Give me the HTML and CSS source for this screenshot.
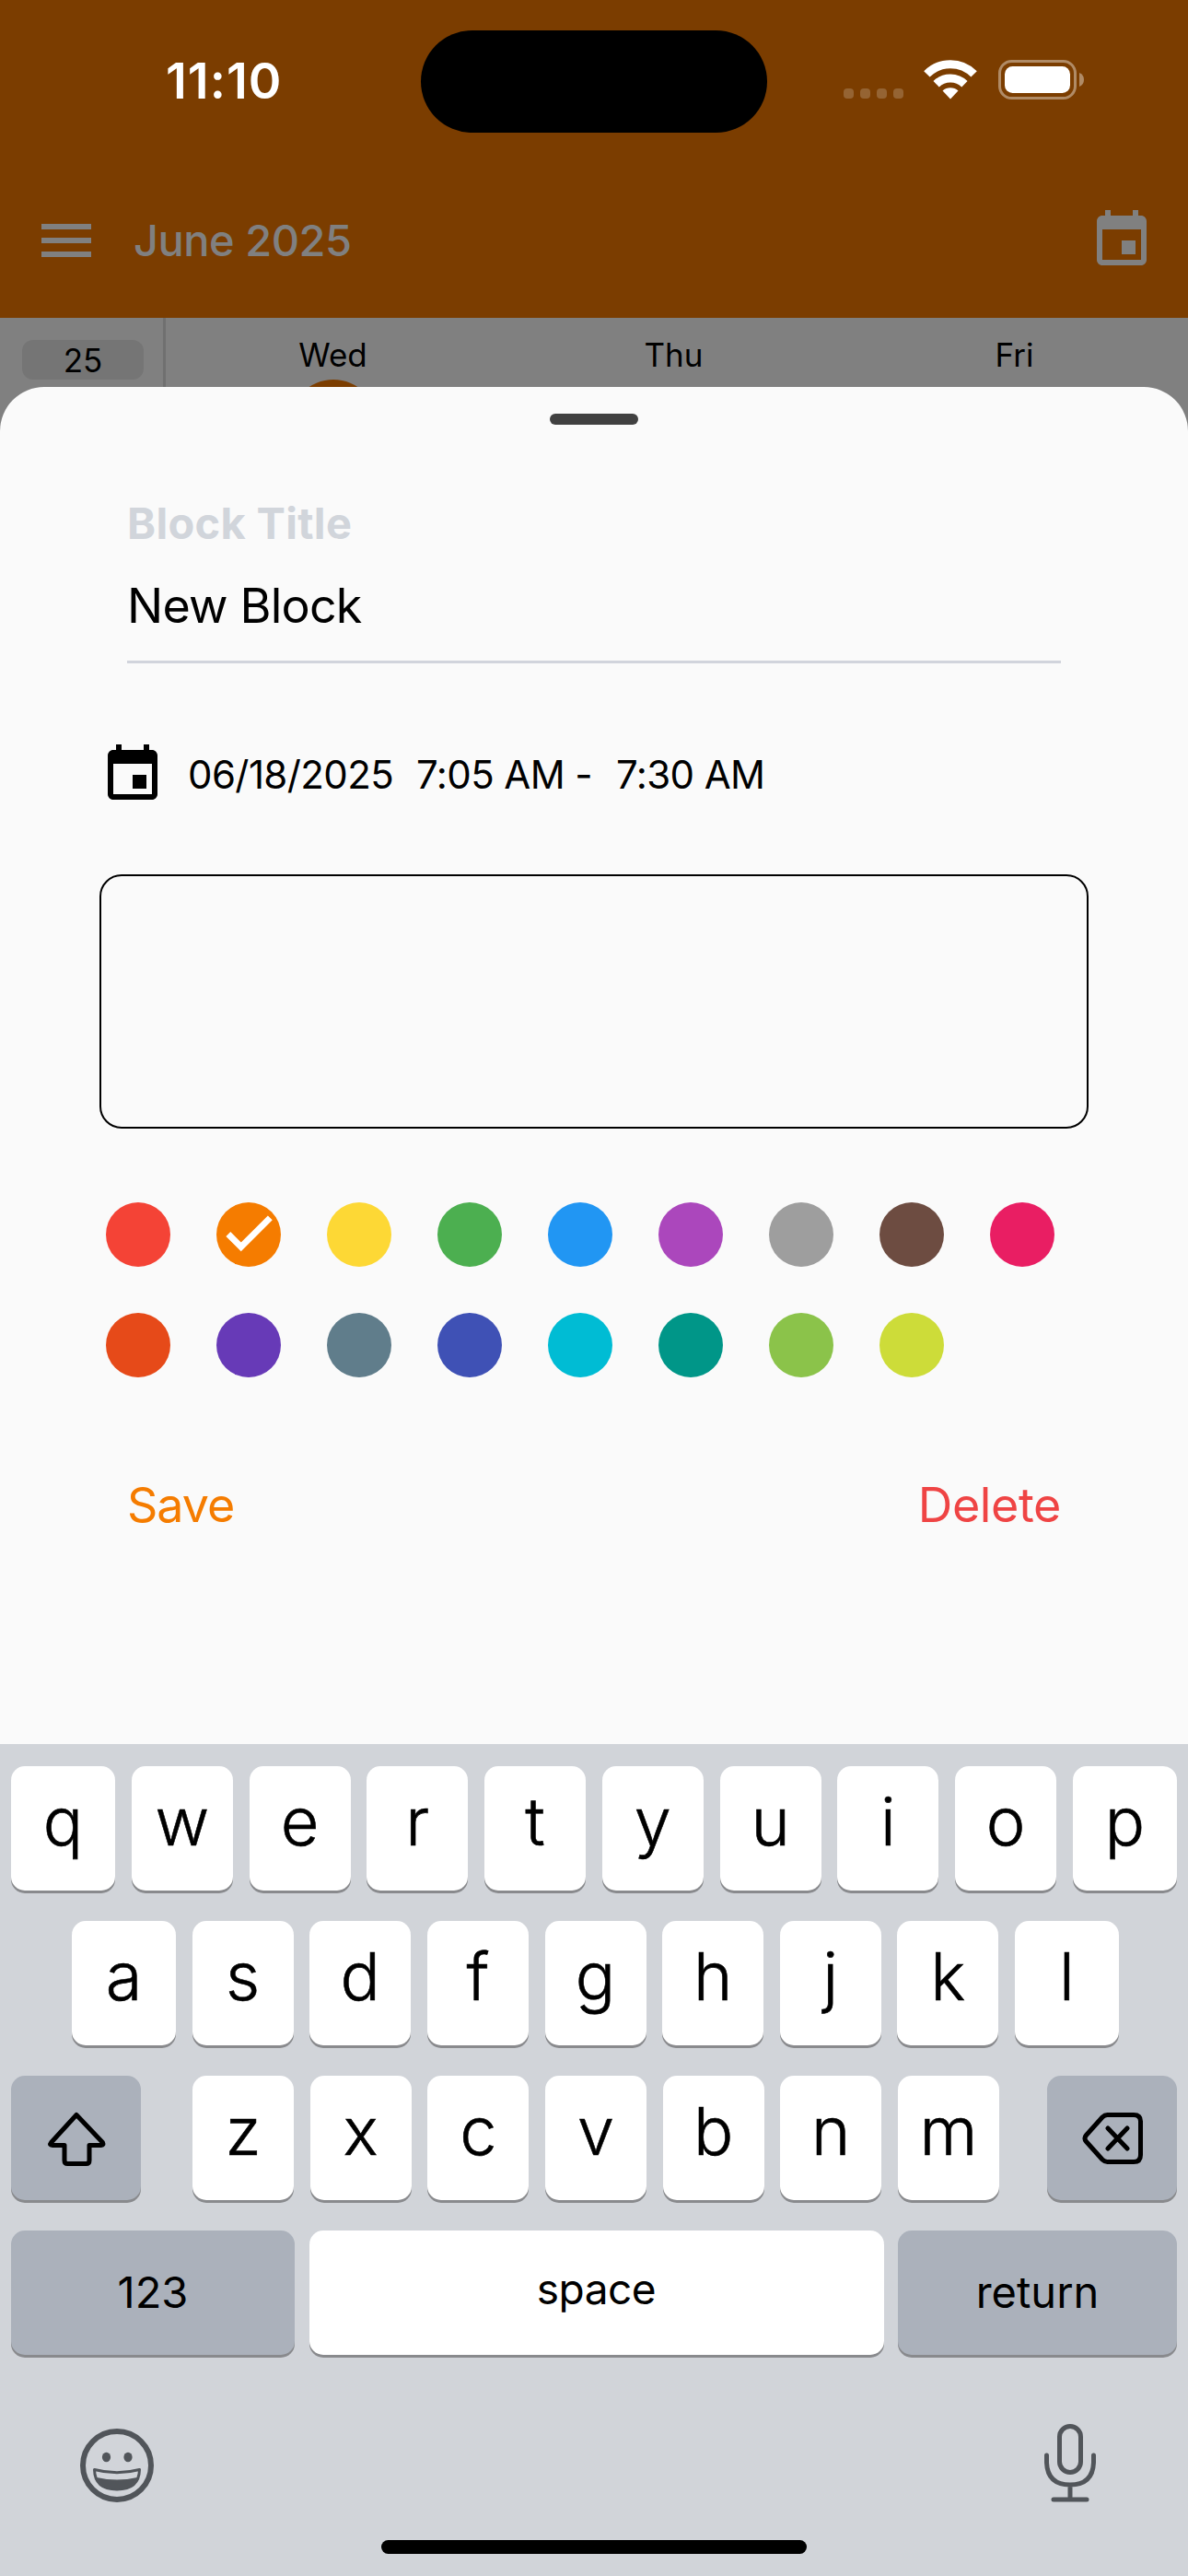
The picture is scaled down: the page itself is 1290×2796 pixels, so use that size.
FILE: index.html
```html
<!DOCTYPE html>
<html lang="en">
<head>
<meta charset="utf-8">
<title>New Block</title>
<link rel="stylesheet" href="styles.css">
</head>
<body>
<div class="phone">
  <header class="top">
    <div class="status">
      <span class="time">11:10</span>
      <span class="island"></span>
      <span class="indicators">
        <span class="cell"><i></i><i></i><i></i><i></i></span>
        <svg class="wifi" width="58" height="43" viewBox="0 0 58 43">
          <g fill="none" stroke="#fff" stroke-width="9">
            <path d="M3.400 15.400A36 36 0 0 1 54.600 15.400"/>
            <path d="M13.600 26.200A22 22 0 0 1 44.400 26.200"/>
          </g>
          <path d="M29 42.500L20.500 33.500A13 13 0 0 1 37.500 33.500Z" fill="#fff"/>
        </svg>
        <svg class="battery" width="94" height="43" viewBox="0 0 94 43">
          <rect x="1.500" y="1.500" width="82" height="40" rx="13" fill="none" stroke="#b08b66" stroke-width="3"/>
          <rect x="7" y="7" width="71" height="29" rx="8.500" fill="#fff"/>
          <path d="M88 14Q93 16 93 21.500Q93 27 88 29Z" fill="#b08b66"/>
        </svg>
      </span>
    </div>
    <div class="appbar">
      <span class="menu"><i></i><i></i><i></i></span>
      <span class="month">June 2025</span>
      <svg class="event" width="72" height="72" viewBox="0 0 24 24"><path fill="#808080" d="M17 12h-5v5h5v-5zM16 1v2H8V1H6v2H5c-1.110 0-1.990.9-1.990 2L3 19c0 1.100.89 2 2 2h14c1.100 0 2-.9 2-2V5c0-1.100-.9-2-2-2h-1V1h-2zm3 18H5V8h14v11z"/></svg>
    </div>
  </header>
  <div class="calendar">
    <div class="week"><span class="badge">25</span></div>
    <div class="day"><span>Wed</span><i class="today"></i></div>
    <div class="day"><span>Thu</span></div>
    <div class="day"><span>Fri</span></div>
  </div>
  <main class="sheet">
    <span class="handle"></span>
    <div class="field">
      <label class="label">Block Title</label>
      <div class="value">New Block</div>
    </div>
    <div class="when">
      <svg width="72" height="72" viewBox="0 0 24 24"><path d="M17 12h-5v5h5v-5zM16 1v2H8V1H6v2H5c-1.110 0-1.990.9-1.990 2L3 19c0 1.100.89 2 2 2h14c1.100 0 2-.9 2-2V5c0-1.100-.9-2-2-2h-1V1h-2zm3 18H5V8h14v11z"/></svg>
      <span class="date">06/18/2025</span><span class="from">7:05 AM -</span><span class="to">7:30 AM</span>
    </div>
    <div class="notes"></div>
    <div class="swatches">
      <i class="red"></i>
      <i class="orange"><svg width="66" height="66" viewBox="0 0 24 24"><path fill="#fff" stroke="#fff" stroke-width=".5" d="M9 16.170 4.830 12l-1.420 1.410L9 19 21 7l-1.410-1.410z"/></svg></i>
      <i class="yellow"></i><i class="green"></i><i class="blue"></i><i class="purple"></i><i class="grey"></i><i class="brown"></i><i class="pink"></i>
      <i class="deep-orange"></i><i class="deep-purple"></i><i class="blue-grey"></i><i class="indigo"></i><i class="cyan"></i><i class="teal"></i><i class="light-green"></i><i class="lime"></i>
    </div>
    <div class="actions"><span class="save">Save</span><span class="delete">Delete</span></div>
  </main>
  <section class="keyboard">
    <div class="row first">
      <span class="key edge">q</span><span class="key">w</span><span class="key">e</span><span class="key">r</span><span class="key">t</span><span class="key">y</span><span class="key">u</span><span class="key">i</span><span class="key">o</span><span class="key edge">p</span>
    </div>
    <div class="row second">
      <span class="key edge">a</span><span class="key">s</span><span class="key">d</span><span class="key">f</span><span class="key">g</span><span class="key">h</span><span class="key">j</span><span class="key">k</span><span class="key edge">l</span>
    </div>
    <div class="row third">
      <span class="key dark mod"><svg width="68" height="60" viewBox="0 0 68 60"><path d="M34 4.500L62.500 34.500Q64 37.500 61 37.500H48V54Q48 57.500 44.500 57.500H24.500Q21 57.500 21 54V37.500H8Q4 37.500 6.500 34.500Z" fill="none" stroke="#000" stroke-width="5" stroke-linejoin="round"/></svg></span>
      <span class="letters"><span class="key">z</span><span class="key">x</span><span class="key">c</span><span class="key">v</span><span class="key">b</span><span class="key">n</span><span class="key">m</span></span>
      <span class="key dark mod"><svg width="68" height="56" viewBox="0 0 68 56"><path d="M28.500 2.500H57Q64.500 2.500 64.500 9.500V46Q64.500 53.500 57 53.500H28.500Q25.500 53.500 23 51L5.500 31.500Q2.500 28 5.500 24.500L23 5Q25.500 2.500 28.500 2.500ZM29 17L50 39M50 17L29 39" fill="none" stroke="#000" stroke-width="5" stroke-linecap="round" stroke-linejoin="round"/></svg></span>
    </div>
    <div class="row fourth">
      <span class="key dark wide">123</span>
      <span class="key wide space">space</span>
      <span class="key dark wide">return</span>
    </div>
    <div class="tools">
      <svg width="80" height="80" viewBox="0 0 80 80">
        <circle cx="40" cy="40" r="37" fill="none" stroke="#51555a" stroke-width="6"/>
        <ellipse cx="28.500" cy="31" rx="4.600" ry="5.200" fill="#51555a"/>
        <ellipse cx="52" cy="31" rx="4.600" ry="5.200" fill="#51555a"/>
        <path d="M15.500 44.500Q40 51 64.500 44.500Q64 66 40 66Q16 66 15.500 44.500Z" fill="none" stroke="#51555a" stroke-width="3" stroke-linejoin="round"/>
        <path d="M18 53Q40 58 62 53Q57 66 40 66Q23 66 18 53Z" fill="#51555a"/>
      </svg>
      <svg width="56" height="85" viewBox="0 0 56 85">
        <g fill="none" stroke="#51555a" stroke-width="5" stroke-linecap="round">
          <rect x="16.500" y="2.500" width="23" height="50" rx="11.500"/>
          <path d="M2.500 34V42Q3.500 66 28 66Q52.500 66 53.500 42V34M28 66V81M10 82H46"/>
        </g>
      </svg>
    </div>
    <span class="home"></span>
  </section>
</div>
</body>
</html>
```
FILE: styles.css
```css
* { box-sizing: border-box; }
body { margin: 0; font-family: Inter, "Liberation Sans", sans-serif; color: #000; }
i { display: block; }
svg { display: block; flex: none; }
.phone { width: 1290px; height: 2796px; overflow: hidden; display: flex; flex-direction: column; background: #808080; }

.top { height: 345px; background: #7b3d00; display: flex; flex-direction: column; flex: none; }
.status { height: 177px; padding-top: 33px; display: grid; grid-template-columns: 457px 376px 457px; }
.time { color: #fff; font-size: 54px; font-weight: 600; line-height: 110px; padding-left: 180px; letter-spacing: 1px; }
.island { height: 111px; border-radius: 56px; background: #000; }
.indicators { display: flex; align-items: flex-start; padding: 32px 0 0 83px; }
.cell { display: flex; gap: 7px; padding-top: 31px; margin-right: 22px; }
.cell i { width: 11px; height: 11px; border-radius: 4px; background: #956433; }
.wifi { margin-right: 23px; }
.appbar { height: 168px; display: flex; align-items: flex-start; padding: 48px 36px 0 45px; }
.menu { width: 54px; display: flex; flex-direction: column; gap: 9px; padding-top: 18px; }
.menu i { height: 6px; background: #808080; }
.month { flex: 1; color: #808080; font-size: 47px; font-weight: 500; line-height: 72px; padding-left: 46px; letter-spacing: -0.5px; }

.calendar { height: 75px; flex: none; display: grid; grid-template-columns: 180px 370px 370px 370px; }
.week { border-right: 3px solid #707070; padding: 24px 21px 0 24px; }
.badge { display: block; height: 43px; border-radius: 12px; background: #757575; text-align: center; font-size: 35px; line-height: 45px; }
.day { font-size: 35px; text-align: center; line-height: 42px; padding: 19px 7px 0 0; }
.day span { display: block; }
.today { width: 96px; height: 96px; border-radius: 50%; background: #7b3d00; margin: 6px auto 0; }

.sheet { position: relative; height: 1473px; flex: none; background: #fafafa; border-radius: 48px 48px 0 0; display: flex; flex-direction: column; padding: 29px 108px 0; }
.handle { width: 96px; height: 12px; border-radius: 6px; background: #404040; align-self: center; }
.field { margin: 72px 30px 0; height: 187px; border-bottom: 3px solid #d1d4dc; }
.label { display: block; font-size: 47px; font-weight: 700; line-height: 70px; color: #d1d5db; letter-spacing: 0.3px; }
.value { font-size: 52px; line-height: 70px; margin-top: 20px; letter-spacing: -0.8px; }
.when { display: flex; align-items: center; margin-top: 85px; height: 72px; font-size: 42px; line-height: 50px; letter-spacing: -0.6px; white-space: pre; }
.when span { padding-bottom: 1px; }
.date { margin-left: 24px; width: 248px; }
.from { width: 217px; }
.notes { margin-top: 72px; height: 276px; border: 2px solid #000; border-radius: 24px; }
.swatches { margin: 80px 0 0 7px; display: grid; grid-template-columns: repeat(9, 70px); gap: 50px; }
.swatches i { height: 70px; border-radius: 50%; }
.swatches svg { margin: 0 2px; }
.red { background: #f44336; }
.orange { background: #f57c00; }
.yellow { background: #fdd835; }
.green { background: #4caf50; }
.blue { background: #2196f3; }
.purple { background: #ab47bc; }
.grey { background: #9e9e9e; }
.brown { background: #6d4c41; }
.pink { background: #e91e63; }
.deep-orange { background: #e64a19; }
.deep-purple { background: #673ab7; }
.blue-grey { background: #607d8b; }
.indigo { background: #3f51b5; }
.cyan { background: #00bcd4; }
.teal { background: #009688; }
.light-green { background: #8bc34a; }
.lime { background: #cddc39; }
.actions { margin: 104px 30px 0; display: flex; justify-content: space-between; font-size: 52px; line-height: 70px; }
.save { color: #f57c00; letter-spacing: -1px; }
.delete { color: #ef4444; letter-spacing: -0.4px; }

.keyboard { height: 903px; flex: none; background: #d1d4d9; padding: 24px 12px; display: flex; flex-direction: column; }
.row { display: flex; height: 135px; margin-bottom: 33px; flex: none; justify-content: space-between; }
.key { width: 110px; height: 135px; border-radius: 15px; background: #fff; box-shadow: 0 3px 0 #898a8d; font-size: 72px; font-weight: 300; -webkit-text-stroke: 0.6px #000; line-height: 120px; text-align: center; }
.edge { width: 113px; }
.second { padding: 0 63px 0 66px; }
.letters { display: flex; width: 876px; justify-content: space-between; margin-left: 4px; }
.dark { background: #abb1bb; }
.mod { width: 141px; display: flex; align-items: center; justify-content: center; }
.wide { width: 308px; font-size: 47px; font-weight: 400; -webkit-text-stroke: 0; line-height: 133px; }
.space { width: 624px; font-size: 46px; letter-spacing: -0.5px; line-height: 127px; }
.wide:last-child { width: 303px; }
.tools { display: flex; justify-content: space-between; align-items: flex-start; padding: 42px 100px 0 75px; height: 168px; flex: none; margin-right: -12px; }
.tools svg:first-child { margin-top: 5px; }
.home { width: 462px; height: 15px; border-radius: 8px; background: #000; align-self: center; flex: none; }
```
